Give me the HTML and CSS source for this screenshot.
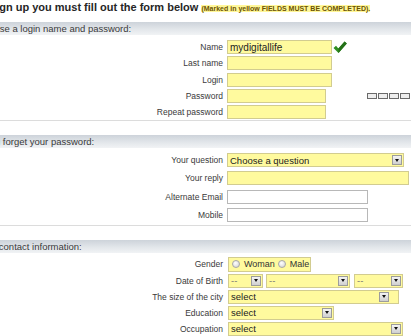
FILE: index.html
```html
<!DOCTYPE html>
<html>
<head>
<meta charset="utf-8">
<link rel="stylesheet" href="styles.css">
</head>
<body>
<div class="page">
  <p class="title">To sign up you must fill out the form below <span class="note">(Marked in yellow FIELDS MUST BE COMPLETED).</span></p>

  <section class="sec">
    <h2 class="bar">Choose a login name and password:</h2>
    <div class="rows rows-a">
      <label class="lbl">Name</label>
      <div class="field">
        <input class="in req w-105" value="mydigitallife">
        <svg class="check" width="14" height="13" viewBox="0 0 14 13"><polygon points="0.5,7 3,4.8 5.4,7.6 11.6,0.5 13.8,2.6 5.5,12" fill="#2f8f22"/><polygon points="5.4,7.6 11.6,0.5 13.8,2.6 5.5,12" fill="#247018"/></svg>
      </div>
      <label class="lbl">Last name</label>
      <div class="field"><input class="in req w-105"></div>
      <label class="lbl">Login</label>
      <div class="field"><input class="in req w-105"></div>
      <label class="lbl">Password</label>
      <div class="field">
        <input class="in req w-99" type="password">
        <div class="meter"><span class="cell"></span><span class="cell"></span><span class="cell"></span><span class="cell"></span></div>
      </div>
      <label class="lbl">Repeat password</label>
      <div class="field"><input class="in req w-99" type="password"></div>
    </div>
  </section>
  <hr class="sep sep-a">

  <section class="sec sec-b">
    <h2 class="bar">If you forget your password:</h2>
    <div class="rows rows-b">
      <label class="lbl">Your question</label>
      <div class="field"><div class="sel w-177"><span class="val">Choose a question</span><span class="btn"></span></div></div>
      <label class="lbl">Your reply</label>
      <div class="field"><input class="in req w-182"></div>
      <label class="lbl">Alternate Email</label>
      <div class="field"><input class="in w-141"></div>
      <label class="lbl">Mobile</label>
      <div class="field"><input class="in w-141"></div>
    </div>
  </section>
  <hr class="sep sep-b">

  <section class="sec sec-c">
    <h2 class="bar">Your contact information:</h2>
    <div class="rows rows-c">
      <label class="lbl">Gender</label>
      <div class="field">
        <div class="gender">
          <span class="radio"></span><span class="rtext">Woman</span>
          <span class="radio"></span><span class="rtext">Male</span>
        </div>
      </div>
      <label class="lbl">Date of Birth</label>
      <div class="field dob">
        <div class="sel w-35 dash"><span class="val">--</span><span class="btn"></span></div>
        <div class="sel w-84 dash"><span class="val">--</span><span class="btn"></span></div>
        <div class="sel w-49 dash"><span class="val">--</span><span class="btn"></span></div>
      </div>
      <label class="lbl">The size of the city</label>
      <div class="field">
        <div class="cityw"><div class="sel inner w-161"><span class="val">select</span><span class="btn"></span></div></div>
      </div>
      <label class="lbl">Education</label>
      <div class="field"><div class="sel w-106"><span class="val">select</span><span class="btn"></span></div></div>
      <label class="lbl">Occupation</label>
      <div class="field"><div class="sel w-175"><span class="val">select</span><span class="btn"></span></div></div>
    </div>
  </section>
</div>
</body>
</html>
```

FILE: styles.css
```css
* { box-sizing: border-box; margin: 0; padding: 0; }

body {
  margin: 0;
  background: #fff;
  font-family: "Liberation Sans", Arial, sans-serif;
  color: #333;
  overflow: hidden;
}

.page {
  margin-left: -23px;
  width: 434px;
}

.title {
  font-size: 11px;
  font-weight: bold;
  line-height: 13px;
  margin: 1px 0 7px -2.7px;
  color: #262626;
  white-space: nowrap;
}

.note {
  font-size: 7px;
  color: #6b5200;
  background: #fff799;
}

.bar {
  font-size: 9.5px;
  font-weight: normal;
  line-height: 13px;
  height: 13px;
  color: #3a3a3a;
  background: linear-gradient(#cdd3da, #e2e6ea 55%, #f1f3f5);
  white-space: nowrap;
}

.rows {
  display: grid;
  grid-template-columns: 246px 1fr;
  column-gap: 4px;
  align-items: center;
}

.rows-a { padding-top: 5px; grid-auto-rows: 14px; row-gap: 2.25px; }
.rows-b { padding-top: 5px; grid-auto-rows: 14px; row-gap: 4.33px; }
.rows-c { padding-top: 4px; row-gap: 2px; }

.lbl {
  font-size: 8.5px;
  text-align: right;
  color: #3a3a3a;
  white-space: nowrap;
}

.field {
  display: flex;
  align-items: center;
}

.rows-c .field { padding-left: 1px; }

.in {
  display: block;
  height: 14px;
  border: 1px solid #b8b8b8;
  background: #fff;
  font: 10px "Liberation Sans", Arial, sans-serif;
  color: #222;
  padding: 0 2px;
  outline: none;
}

.req {
  background: #fffa9e;
  border-color: #d2cc90;
}

.w-35 { width: 35px; }
.w-49 { width: 49px; }
.w-84 { width: 84px; }
.w-99 { width: 99px; }
.w-105 { width: 105px; }
.w-106 { width: 106px; }
.w-141 { width: 141px; }
.w-161 { width: 161px; }
.w-175 { width: 175px; }
.w-177 { width: 177px; }
.w-182 { width: 182px; }

.check { margin-left: 1px; flex-shrink: 0; }

.meter {
  display: flex;
  gap: 1px;
  margin-left: 41px;
}

.cell {
  flex-shrink: 0;
  width: 10px;
  height: 6px;
  border: 1px solid #6a6a6a;
  background: #eeeeee;
}

.sep {
  border: 0;
  height: 1px;
  background: #dcdcdc;
}

.sep-a { margin-top: 1px; }
.sep-b { margin-top: 3px; }
.sec-b, .sec-c { margin-top: 14px; }

.sel {
  display: flex;
  align-items: center;
  height: 14px;
  border: 1px solid #d2cc90;
  background: #fffa9e;
  font-size: 9.5px;
  color: #222;
  padding-left: 2px;
  white-space: nowrap;
  flex-shrink: 0;
}

.sel.dash { color: #777; }

.sel .btn {
  flex-shrink: 0;
  margin-left: auto;
  margin-right: 1px;
  width: 10px;
  height: 10px;
  border: 1px solid #9c9c9c;
  background: linear-gradient(#f4f4f4, #cfcfcf);
  display: flex;
  align-items: center;
  justify-content: center;
}

.sel .btn::after {
  content: "";
  border-left: 2.5px solid transparent;
  border-right: 2.5px solid transparent;
  border-top: 3px solid #111;
}

.dob { gap: 3px; }
.dob .sel:nth-child(3) { margin-left: 1px; }

.gender {
  display: flex;
  align-items: center;
  width: 83px;
  height: 15px;
  border: 1px solid #d2cc90;
  background: #fffa9e;
  padding-left: 3px;
  font-size: 9px;
  color: #333;
  white-space: nowrap;
}

.radio {
  flex-shrink: 0;
  width: 8px;
  height: 8px;
  border-radius: 50%;
  border: 1px solid #a8a8a8;
  background: radial-gradient(circle at 40% 35%, #ffffff, #d0d0d0);
  margin-right: 4px;
}

.rtext { margin-right: 3px; }

.cityw {
  display: flex;
  width: 171px;
  height: 14px;
  border: 1px solid #d2cc90;
  background: #fffa9e;
}

.cityw .sel.inner {
  height: 12px;
  border: 0;
}
```
